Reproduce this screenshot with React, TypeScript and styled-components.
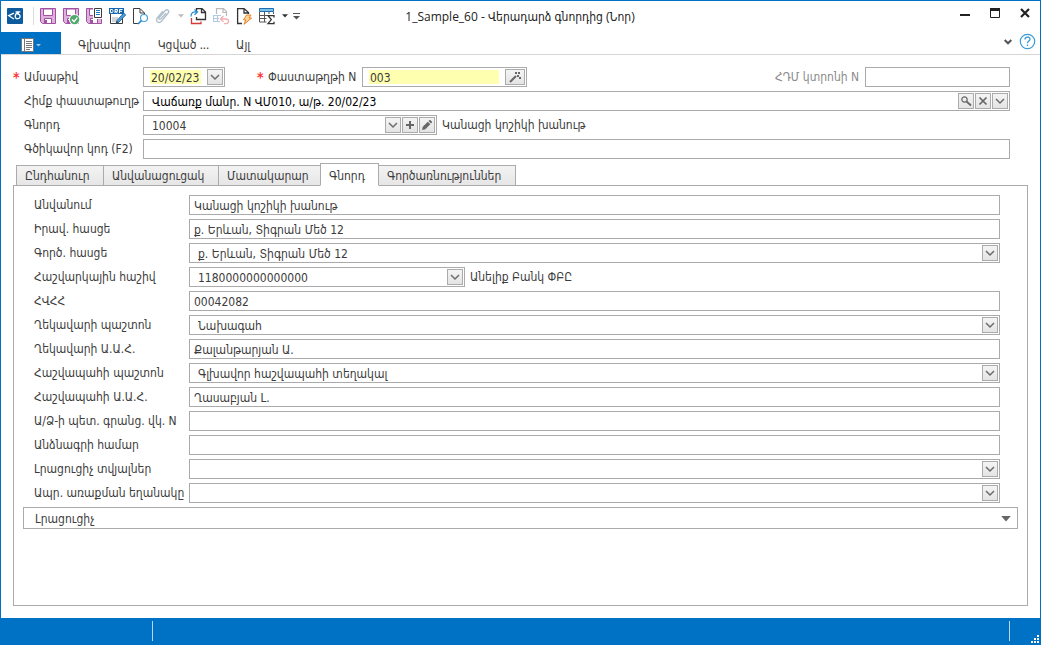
import React from "react";
import styled, { createGlobalStyle, css } from "styled-components";

const blue = "#0072c6";
const line = "#ababab";
const ink = "#3c3c3c";
const uiFont = '"DejaVu Sans Condensed", "DejaVu Sans", sans-serif';
const titleFont = '"Open Sans", "DejaVu Sans Condensed", "DejaVu Sans", sans-serif';

const GlobalStyle = createGlobalStyle`
  *, *::before, *::after { box-sizing: border-box; }
  body { margin: 0; background: #fff; }
  button, input, select { font: inherit; color: inherit; margin: 0; }
`;

const Window = styled.div`
  display: flex;
  flex-direction: column;
  min-height: 100vh;
  margin-right: 1px;
  border: 1px solid ${blue};
  background: #fff;
  color: ${ink};
  font: 12px/16px ${uiFont};
`;

const TitleBar = styled.header`
  display: grid;
  grid-template-columns: 1fr auto 1fr;
  align-items: center;
  height: 31px;
  padding: 0 7px 0 6px;
`;

const QuickAccess = styled.div`
  display: flex;
  align-items: center;
  gap: 6px;
  padding-bottom: 1px;
`;

const Logo = styled.svg`
  width: 16px;
  height: 16px;
  flex: none;
`;

const Divider = styled.span`
  width: 1px;
  height: 18px;
  margin-left: 4px;
  background: #dcdcdc;
`;

const IconButton = styled.button<{ $narrow?: boolean; $dim?: boolean }>`
  display: flex;
  align-items: center;
  justify-content: center;
  flex: none;
  width: ${(p) => (p.$narrow ? 6 : 17)}px;
  height: 18px;
  padding: 0;
  border: 0;
  background: none;
  opacity: ${(p) => (p.$dim ? 0.4 : 1)};
  svg { flex: none; }
`;

const Title = styled.h1`
  margin: 0;
  font: 12px/16px ${titleFont};
  color: #222;
  white-space: nowrap;
`;

const WindowButtons = styled.div`
  display: flex;
  justify-content: flex-end;
  gap: 14px;
  padding-bottom: 8px;
`;

const WindowButton = styled.button`
  display: flex;
  width: 16px;
  height: 16px;
  padding: 0;
  border: 0;
  background: none;
`;

const Ribbon = styled.nav`
  display: flex;
  align-items: stretch;
  height: 23px;
  border-bottom: 1px solid #d5d5d5;
  font-family: ${titleFont};
`;

const FileButton = styled.button`
  display: flex;
  align-items: center;
  justify-content: center;
  width: 60px;
  padding: 3px 0 0;
  border: 0;
  background: ${blue};
`;

const RibbonTab = styled.button`
  margin-left: 12px;
  padding: 4px 5px 0;
  border: 0;
  background: none;
  line-height: 18px;
  & + & { margin-left: 17px; }
`;

const RibbonTools = styled.div`
  display: flex;
  align-items: flex-start;
  gap: 8px;
  margin-left: auto;
  padding-right: 4px;
`;

const Form = styled.form`
  display: flex;
  flex: 1;
  flex-direction: column;
  padding: 12px;
`;

const Header = styled.div`
  display: flex;
  flex-direction: column;
  gap: 4px;
  padding-right: 18px;
`;

const Row = styled.div`
  display: flex;
  align-items: center;
  height: 20px;
`;

const HdmGroup = styled.div`
  display: flex;
  margin-left: auto;
`;

const Star = styled.span`
  width: 11px;
  flex: none;
  font-size: 14px;
  font-weight: bold;
  color: #f33;
`;

const Gap = styled.span`
  flex: none;
  width: 32px;
`;

const Label = styled.label<{ $width: number; $muted?: boolean }>`
  flex: none;
  width: ${(p) => p.$width}px;
  height: 20px;
  line-height: 20px;
  white-space: nowrap;
  color: ${(p) => (p.$muted ? "#8a8a8a" : "inherit")};
`;

const Frame = styled.div<{ $width?: number }>`
  display: flex;
  align-items: center;
  gap: 1px;
  min-width: 0;
  height: 20px;
  padding: 1px;
  border: 1px solid ${line};
  background: #fff;
  ${(p) => (p.$width ? css`flex: none; width: ${p.$width}px;` : css`flex: 1;`)}
`;

const TextBox = styled.input<{ $pad?: number; $dark?: boolean }>`
  flex: 1;
  width: 0;
  min-width: 0;
  height: 16px;
  padding: 1px 0 0 ${(p) => p.$pad ?? 3}px;
  border: 0;
  outline: 0;
  background: transparent;
  color: ${(p) => (p.$dark ? "#000" : "inherit")};
`;

const MarkedBox = styled(TextBox)`
  height: 14px;
  margin: 0 5px;
  padding: 1px 0 0 1px;
  background: #ffffb0;
`;

const miniBox = css`
  display: flex;
  align-items: center;
  justify-content: center;
  flex: none;
  width: 16px;
  height: 16px;
  padding: 0;
  border: 1px solid ${line};
  background: linear-gradient(#f4f4f4, #e4e4e4);
`;

const MiniButton = styled.button<{ $wide?: boolean }>`
  ${miniBox}
  width: ${(p) => (p.$wide ? 20 : 16)}px;
`;

const SelectArea = styled.div`
  display: grid;
  grid-template-columns: 1fr 16px;
  flex: 1;
  min-width: 0;
`;

const SelectBox = styled.select`
  grid-area: 1 / 1 / 2 / 3;
  width: 100%;
  height: 16px;
  padding: 1px 20px 0 7px;
  border: 0;
  outline: 0;
  appearance: none;
  background: transparent;
`;

const SelectMark = styled.span`
  ${miniBox}
  grid-area: 1 / 2;
  pointer-events: none;
`;

const Note = styled.output`
  padding-left: 5px;
  line-height: 20px;
  white-space: nowrap;
`;

const TabStrip = styled.div`
  display: flex;
  align-items: flex-end;
  height: 27px;
  margin-bottom: -1px;
  padding-left: 3px;
`;

const Tab = styled.button<{ $active?: boolean; $width: number }>`
  position: relative;
  z-index: ${(p) => (p.$active ? 1 : 0)};
  width: ${(p) => p.$width}px;
  height: ${(p) => (p.$active ? 23 : 21)}px;
  margin-right: -1px;
  padding: ${(p) => (p.$active ? 2 : 0)}px 0 0 8px;
  border: 1px solid ${line};
  border-bottom-color: ${(p) => (p.$active ? "#fff" : line)};
  background: ${(p) => (p.$active ? "#fff" : "linear-gradient(#f3f3f3, #e6e6e6)")};
  text-align: left;
  white-space: nowrap;
`;

const Panel = styled.section`
  display: flex;
  flex: 1;
  flex-direction: column;
  gap: 4px;
  padding: 9px 9px 0;
  border: 1px solid ${line};
`;

const PanelRow = styled(Row)`
  padding: 0 18px 0 11px;
`;

const GroupButton = styled.button`
  display: flex;
  align-items: center;
  justify-content: space-between;
  height: 22px;
  padding: 1px 6px 0 11px;
  border: 1px solid ${line};
  background: #fff;
`;

const StatusBar = styled.footer`
  display: flex;
  height: 26px;
  padding-top: 3px;
  background: ${blue};
`;

const StatusCell = styled.div<{ $width?: number }>`
  ${(p) => (p.$width ? css`width: ${p.$width}px;` : css`flex: 1;`)}
  height: 20px;
  border-right: 1px solid #b5d8f2;
`;

const Grip = styled.svg`
  width: 30px;
  height: 23px;
`;

const Chevron = () => (
  <svg width="10" height="8" viewBox="0 0 10 8">
    <path d="M1 2l4 4 4-4" fill="none" stroke="#6c6c6c" strokeWidth="1.5" />
  </svg>
);

const Caret = ({ color = "#555", size = 6 }: { color?: string; size?: number }) => (
  <svg width={size} height={size / 2 + 1} viewBox="0 0 8 5">
    <path d="M0 0h8L4 4.5z" fill={color} />
  </svg>
);

const Glyph = ({ children }: { children: React.ReactNode }) => (
  <svg width="17" height="17" viewBox="0 0 17 17" fill="none">
    {children}
  </svg>
);

const Floppy = () => (
  <>
    <path d="M.5.5h15v15h-13l-2-2z" fill="#dcb2dc" stroke="#a350a3" />
    <path d="M3.500 1h9v6.500h-9z" fill="#fff" stroke="#a350a3" />
    <path d="M4.500 15.500v-5h7v5z" fill="#fff" stroke="#a350a3" />
    <path d="M5 12h2v3H5z" fill="#a350a3" />
  </>
);

const SaveIcon = () => <Glyph><Floppy /></Glyph>;

const SaveCheckIcon = () => (
  <Glyph>
    <Floppy />
    <circle cx="11.500" cy="11.500" r="5.500" fill="#fff" />
    <circle cx="11.600" cy="11.600" r="4.700" fill="#4fa96b" />
    <path d="M9 11.600l2 2 3.300-4" stroke="#fff" strokeWidth="1.400" />
  </Glyph>
);

const SaveDocIcon = () => (
  <Glyph>
    <Floppy />
    <path d="M7 0h10v11H7z" fill="#fff" />
    <path d="M8.500.5h7v9h-7z" fill="#fff" stroke="#3c3c3c" />
    <path d="M10 2.500h4M10 4.500h4M10 6.500h4" stroke="#1e7fc2" />
  </Glyph>
);

const DraftIcon = () => (
  <Glyph>
    <path d="M1.500 6v9.500h12V6" stroke="#3c3c3c" />
    <path d="M3 9h6v5H3z" fill="#d5d5d5" />
    <path d="M0 0h15v6H0z" fill="#1567ad" />
    <path d="M1.500 1.500h1.700l.8.8v1.500l-.8.800H1.500zM6 5V1.500h2.500v1.800H6l2.500 1.700M10.500 5V1.500h3M10.500 3.300h2.500" stroke="#fff" />
    <path d="M7 15.600l1-3.200L14.700 5l2 2-7 7.400z" fill="#4b9bd6" stroke="#1d5f9a" strokeWidth=".8" />
    <path d="M7 15.600l.8-2.500 1.600 1.500z" fill="#333" />
  </Glyph>
);

const PreviewIcon = () => (
  <Glyph>
    <path d="M6 15.500H1.500V.5H8L12.500 5v2M8 1v4h4" stroke="#3c3c3c" />
    <circle cx="12" cy="10" r="3.500" stroke="#4aa0d8" strokeWidth="1.200" />
    <path d="M9.500 12.500L6 16" stroke="#2c85c4" strokeWidth="1.700" />
  </Glyph>
);

const ClipIcon = () => (
  <Glyph>
    <path
      d="M11 5.200L5.800 10.800c-1.200 1.200-2.500-.1-1.500-1.400l6-6.800c2-2 4.600.3 2.700 2.700l-6.600 8c-2.500 2.800-6.400-.3-4-3.500l5.600-6.500"
      stroke="#3f6484"
      strokeWidth="1.400"
    />
  </Glyph>
);

const CopyIcon = () => (
  <Glyph>
    <path d="M6.500 4V.6H12L15.500 4v7.500h-9V9M11.500 1v3.500h4" stroke="#333" strokeWidth="1.300" />
    <path d="M1.500 10v5.500h9.500v-2" stroke="#d83a3a" strokeWidth="1.300" />
    <path d="M1 8.500c0-4 2.500-5 5.500-4.500M4.500 1.500l3 2.500-3 2.800" stroke="#2f8fd0" strokeWidth="1.300" />
  </Glyph>
);

const RestoreIcon = () => (
  <Glyph>
    <path d="M3.500 6V.6h7l3 3V8M10 1v3.500h3.500" stroke="#555" strokeWidth="1.200" />
    <path d="M0 7.500h8M0 10.500h6M0 13.500h7M.5 7v7M4.500 7v7" stroke="#3d80b8" strokeWidth="1.200" />
    <path d="M7.500 11H13c3.400 0 3.400 4.700 0 4.700h-2M10.500 8l-3 3 3 3" stroke="#e03c3c" strokeWidth="1.300" />
  </Glyph>
);

const LightningIcon = () => (
  <Glyph>
    <path d="M6 15.500H1.600V.6H8l4.500 4V6M8 1v4h4" stroke="#333" strokeWidth="1.300" />
    <path d="M10.500 7h4.500l-2 3h2.700L8 16.300l1.700-4.300H7.500z" fill="#fbd49a" stroke="#e8832a" />
  </Glyph>
);

const TotalsIcon = () => (
  <Glyph>
    <path d="M.5.500h14v3H.5z" fill="#7cc0ea" stroke="#1b6fae" />
    <path d="M.5 4v10h7M14.500 4v2M.5 7.500h8M.5 10.500h7M5.500 4v10M10 4v2" stroke="#555" />
    <path d="M15 9.500V7.600H9l3.300 4-3.300 4h6v-1.900" stroke="#333" strokeWidth="1.300" />
  </Glyph>
);

const CustomizeIcon = () => (
  <svg width="8" height="8" viewBox="0 0 8 8">
    <path d="M0 1.500h7" stroke="#555" />
    <path d="M0 4h7L3.500 7.500z" fill="#555" />
  </svg>
);

type Field = {
  id: string;
  label: string;
  value?: string;
  kind?: "select";
  width?: number;
  note?: string;
};

const fields: Field[] = [
  { id: "name", label: "Անվանում", value: "Կանացի կոշիկի խանութ" },
  { id: "legal", label: "Իրավ. հասցե", value: "ք. Երևան, Տիգրան Մեծ 12" },
  { id: "actual", label: "Գործ. հասցե", value: "ք. Երևան, Տիգրան Մեծ 12", kind: "select" },
  { id: "account", label: "Հաշվարկային հաշիվ", value: "1180000000000000", kind: "select", width: 276, note: "Անելիք Բանկ ՓԲԸ" },
  { id: "tin", label: "ՀՎՀՀ", value: "00042082" },
  { id: "headPost", label: "Ղեկավարի պաշտոն", value: "Նախագահ", kind: "select" },
  { id: "headName", label: "Ղեկավարի Ա.Ա.Հ.", value: "Քալանթարյան Ա." },
  { id: "accPost", label: "Հաշվապահի պաշտոն", value: "Գլխավոր հաշվապահի տեղակալ", kind: "select" },
  { id: "accName", label: "Հաշվապահի Ա.Ա.Հ.", value: "Ղասաբյան Լ." },
  { id: "stateReg", label: "Ա/Ձ-ի պետ. գրանց. վկ. N" },
  { id: "passport", label: "Անձնագրի համար" },
  { id: "extra", label: "Լրացուցիչ տվյալներ", kind: "select" },
  { id: "delivery", label: "Ապր. առաքման եղանակը", kind: "select" },
];

const tabs = [
  { text: "Ընդհանուր", width: 88 },
  { text: "Անվանացուցակ", width: 116 },
  { text: "Մատակարար", width: 103 },
  { text: "Գնորդ", width: 59, active: true },
  { text: "Գործառնություններ", width: 138 },
];

const Dropdown = ({ id, value = "" }: { id: string; value?: string }) => (
  <SelectArea>
    <SelectBox id={id} defaultValue={value}>
      <option>{value}</option>
    </SelectBox>
    <SelectMark><Chevron /></SelectMark>
  </SelectArea>
);

export default function App() {
  return (
    <>
      <GlobalStyle />
      <Window>
        <TitleBar>
          <QuickAccess>
            <Logo viewBox="0 0 16 16">
              <rect width="16" height="16" rx="1" fill="#0d5a9c" />
              <path d="M7 5.200L1.700 7.700 7 11M8.500 3.800h4.800M12 4.500c-4.500.5-5 6.200-1.400 6.200s3.200-5.200-.6-4.800" fill="none" stroke="#fff" strokeWidth="1.300" />
            </Logo>
            <Divider />
            <IconButton aria-label="Save"><SaveIcon /></IconButton>
            <IconButton aria-label="Save and confirm"><SaveCheckIcon /></IconButton>
            <IconButton aria-label="Save and print"><SaveDocIcon /></IconButton>
            <IconButton aria-label="Draft"><DraftIcon /></IconButton>
            <IconButton aria-label="Preview"><PreviewIcon /></IconButton>
            <IconButton aria-label="Attach" $dim><ClipIcon /></IconButton>
            <IconButton aria-label="Attachments" $narrow $dim><Caret /></IconButton>
            <IconButton aria-label="Copy"><CopyIcon /></IconButton>
            <IconButton aria-label="Restore" $dim><RestoreIcon /></IconButton>
            <IconButton aria-label="Run"><LightningIcon /></IconButton>
            <IconButton aria-label="Totals"><TotalsIcon /></IconButton>
            <IconButton aria-label="Totals options" $narrow><Caret color="#333" /></IconButton>
            <IconButton aria-label="Customize" $narrow><CustomizeIcon /></IconButton>
          </QuickAccess>
          <Title>1_Sample_60 - Վերադարձ գնորդից (Նոր)</Title>
          <WindowButtons>
            <WindowButton aria-label="Minimize">
              <svg width="16" height="16"><path d="M3 10h10" stroke="#222" strokeWidth="2" /></svg>
            </WindowButton>
            <WindowButton aria-label="Maximize">
              <svg width="16" height="16">
                <path d="M3.500 4v8.500h9V4" fill="none" stroke="#222" />
                <path d="M3 4.500h10" stroke="#222" strokeWidth="3" />
              </svg>
            </WindowButton>
            <WindowButton aria-label="Close">
              <svg width="16" height="16"><path d="M4 4l8 8M12 4l-8 8" stroke="#222" strokeWidth="2.200" /></svg>
            </WindowButton>
          </WindowButtons>
        </TitleBar>

        <Ribbon>
          <FileButton aria-label="File">
            <svg width="20" height="14" viewBox="0 0 20 14">
              <path d="M.5.5h12v13H.5z" fill="#fff" stroke="#777" />
              <path d="M3.500 0v14" stroke="#777" />
              <path d="M5 3.500h6M5 5.500h6M5 7.500h6M5 9.500h6M5 11.500h4" stroke="#777" />
              <path d="M15 6h5l-2.500 2.500z" fill="#a8c4da" />
            </svg>
          </FileButton>
          <RibbonTab>Գլխավոր</RibbonTab>
          <RibbonTab>Կցված ...</RibbonTab>
          <RibbonTab>Այլ</RibbonTab>
          <RibbonTools>
            <IconButton aria-label="Collapse" $narrow>
              <svg width="8" height="8"><path d="M.7 3L4 6.300 7.300 3" fill="none" stroke="#555" strokeWidth="2" /></svg>
            </IconButton>
            <IconButton aria-label="Help">
              <svg width="17" height="17" viewBox="0 0 17 17" fill="none" stroke="#3a9ad4">
                <circle cx="8.500" cy="8.500" r="7.200" strokeWidth="1.200" />
                <path d="M6 6.500c0-3.300 5-3.200 5-.3 0 1.800-2.500 1.900-2.500 4M8.500 11.500v1.500" strokeWidth="1.300" />
              </svg>
            </IconButton>
          </RibbonTools>
        </Ribbon>

        <Form onSubmit={(e) => e.preventDefault()}>
          <Header>
            <Row>
              <Star>*</Star>
              <Label htmlFor="date" $width={119}>Ամսաթիվ</Label>
              <Frame $width={82}>
                <MarkedBox id="date" defaultValue="20/02/23" />
                <MiniButton type="button" aria-label="Calendar"><Chevron /></MiniButton>
              </Frame>
              <Gap />
              <Star>*</Star>
              <Label htmlFor="number" $width={94}>Փաստաթղթի N</Label>
              <Frame $width={165}>
                <MarkedBox id="number" defaultValue="003" />
                <MiniButton type="button" aria-label="Generate" $wide>
                  <svg width="14" height="12" viewBox="0 0 14 12">
                    <path d="M2 11l6-6" stroke="#666" strokeWidth="2" />
                    <path d="M7 1h2v2H7zM10 1h2v2h-2zM9 4h2v2H9zM11 6h2v2h-2z" fill="#666" />
                  </svg>
                </MiniButton>
              </Frame>
              <HdmGroup>
                <Label htmlFor="coupon" $width={90} $muted>ՀԴՄ կտրոնի N</Label>
                <Frame $width={145}><TextBox id="coupon" /></Frame>
              </HdmGroup>
            </Row>
            <Row>
              <Star />
              <Label htmlFor="basis" $width={119}>Հիմք փաստաթուղթ</Label>
              <Frame>
                <TextBox id="basis" $pad={7} $dark defaultValue="Վաճառք մանր. N ՎՄ010, ա/թ. 20/02/23" />
                <MiniButton type="button" aria-label="Find">
                  <svg width="12" height="12" fill="none" stroke="#666">
                    <circle cx="4.500" cy="4.500" r="2.700" strokeWidth="1.200" />
                    <path d="M6.500 6.500L11 10.500" strokeWidth="1.700" />
                  </svg>
                </MiniButton>
                <MiniButton type="button" aria-label="Clear">
                  <svg width="10" height="10"><path d="M1.500 1.500l7 7M8.500 1.500l-7 7" stroke="#666" strokeWidth="1.700" /></svg>
                </MiniButton>
                <MiniButton type="button" aria-label="Open"><Chevron /></MiniButton>
              </Frame>
            </Row>
            <Row>
              <Star />
              <Label htmlFor="buyer" $width={119}>Գնորդ</Label>
              <Frame $width={294}>
                <Dropdown id="buyer" value="10004" />
                <MiniButton type="button" aria-label="Add">
                  <svg width="10" height="10"><path d="M5 1v8M1 5h8" stroke="#666" strokeWidth="2" /></svg>
                </MiniButton>
                <MiniButton type="button" aria-label="Edit">
                  <svg width="12" height="12">
                    <path d="M1 11l.8-3.300 5-5 2.500 2.500-5 5zM7.500 2L9 .7 11.300 3 10 4.500z" fill="#666" />
                  </svg>
                </MiniButton>
              </Frame>
              <Note htmlFor="buyer">Կանացի կոշիկի խանութ</Note>
            </Row>
            <Row>
              <Star />
              <Label htmlFor="barcode" $width={119}>Գծիկավոր կոդ (F2)</Label>
              <Frame><TextBox id="barcode" /></Frame>
            </Row>
          </Header>

          <TabStrip role="tablist">
            {tabs.map((t) => (
              <Tab key={t.text} type="button" role="tab" aria-selected={!!t.active} $active={t.active} $width={t.width}>
                {t.text}
              </Tab>
            ))}
          </TabStrip>
          <Panel>
            {fields.map((f) => (
              <PanelRow key={f.id}>
                <Label htmlFor={f.id} $width={155}>{f.label}</Label>
                <Frame $width={f.width}>
                  {f.kind === "select" ? (
                    <Dropdown id={f.id} value={f.value} />
                  ) : (
                    <TextBox id={f.id} defaultValue={f.value} />
                  )}
                </Frame>
                {f.note && <Note htmlFor={f.id}>{f.note}</Note>}
              </PanelRow>
            ))}
            <GroupButton type="button">
              Լրացուցիչ
              <Caret color="#666" size={10} />
            </GroupButton>
          </Panel>
        </Form>

        <StatusBar>
          <StatusCell $width={152} />
          <StatusCell />
          <Grip viewBox="0 0 30 23">
            <path d="M27 14h2v2h-2zM24 17h2v2h-2zM27 17h2v2h-2zM21 20h2v2h-2zM24 20h2v2h-2zM27 20h2v2h-2z" fill="#fff" />
          </Grip>
        </StatusBar>
      </Window>
    </>
  );
}
